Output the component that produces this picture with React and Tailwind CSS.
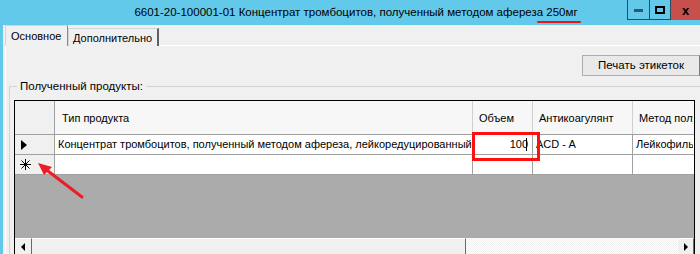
import React from 'react'

const font = { fontFamily: '"Liberation Sans", Arial, sans-serif' }

function TitleBar() {
  return (
    <div className="relative h-[25px] shrink-0 grid grid-cols-[1fr_auto_1fr] items-center">
      <div />
      <div className="pl-[12px] pt-[1px] text-[11.5px] text-black whitespace-nowrap">
        6601-20-100001-01 Концентрат тромбоцитов, полученный методом афереза{' '}
        <span className="relative">
          250мг
          <span className="absolute left-[-9px] right-[-3px] top-[15px] h-[2px] rounded-full bg-[#e8141b]" />
        </span>
      </div>
      <div className="flex justify-end self-start">
        <div className="w-[23px] h-[20px] border border-[#2b4a5a] border-t-0 flex items-center justify-center">
          <div className="w-[9px] h-[3px] bg-[#2e5b70] mt-[1px]" />
        </div>
        <div className="w-[21px] h-[20px] border-b border-r border-[#2b4a5a] flex items-center justify-center">
          <div className="w-[10px] h-[8px] border-2 border-black" />
        </div>
        <div className="w-[29px] h-[20px] bg-[#c7504c] flex items-center justify-center text-[13px] font-bold text-black leading-none">
          x
        </div>
      </div>
    </div>
  )
}

function Tabs() {
  return (
    <div className="flex items-end h-[21px] pl-[2px] shrink-0">
      <div className="h-[21px] w-[63px] bg-[#f0f0f0] border border-b-0 border-[#d4d4d4] border-r-[#8c8c8c] pl-[5px] pt-[2px] text-[11px] text-black">
        Основное
      </div>
      <div className="h-[18px] w-[91px] bg-[#f0f0f0] border border-b-0 border-[#d4d4d4] border-r-[#606060] border-r-2 pl-[4px] pt-[1px] text-[11px] text-black whitespace-nowrap">
        Дополнительно
      </div>
      <div className="flex-1 border-b border-[#ffffff]" />
    </div>
  )
}

function Arrow() {
  return (
    <svg className="absolute left-[34px] top-[158px]" width="56" height="44" viewBox="0 0 56 44">
      <line x1="48" y1="39" x2="10" y2="10" stroke="#ee1c25" strokeWidth="3" strokeLinecap="round" />
      <polygon points="4,5 18,9 10,17" fill="#ee1c25" />
    </svg>
  )
}

function Star() {
  return (
    <svg width="11" height="11" viewBox="0 0 11 11" stroke="black" strokeWidth="1">
      <line x1="5.5" y1="0" x2="5.5" y2="11" />
      <line x1="0" y1="5.5" x2="11" y2="5.5" />
      <line x1="1.5" y1="1.5" x2="9.5" y2="9.5" />
      <line x1="9.5" y1="1.5" x2="1.5" y2="9.5" />
    </svg>
  )
}

function Grid() {
  const cols = 'grid grid-cols-[40px_418px_60px_100px_60px]'
  return (
    <div className="relative w-[681px] h-[157px] border border-black bg-[#ababab] flex flex-col overflow-hidden">
      <div className={`${cols} h-[34px] bg-[#f7f7f7] border-b border-[#a0a0a0] text-[11px] text-black`}>
        <div className="border-r border-[#a0a0a0] bg-[#f0f0f0]" />
        <div className="border-r border-[#d0d0d0] flex items-center pl-[7px] pt-[2px]">Тип продукта</div>
        <div className="border-r border-[#d0d0d0] flex items-center pl-[6px] pt-[2px]">Объем</div>
        <div className="border-r border-[#d0d0d0] flex items-center pl-[6px] pt-[2px]">Антикоагулянт</div>
        <div className="flex items-center pl-[6px] pt-[2px] whitespace-nowrap overflow-hidden">Метод полученния</div>
      </div>
      <div className={`${cols} h-[20px] bg-white border-b border-[#a0a0a0] text-[11px] text-black`}>
        <div className="border-r border-[#a0a0a0] bg-[#f0f0f0] flex items-center pl-[6px]">
          <span className="w-0 h-0 border-y-[5px] border-y-transparent border-l-[6px] border-l-black" />
        </div>
        <div className="border-r border-[#a0a0a0] flex items-center pl-[3px] whitespace-nowrap overflow-hidden">
          Концентрат тромбоцитов, полученный методом афереза, лейкоредуцированный
        </div>
        <div className="border-r border-[#a0a0a0] flex items-center justify-end pr-[5px]">
          100<span className="w-[1px] h-[13px] bg-black ml-[-2px]" />
        </div>
        <div className="border-r border-[#a0a0a0] flex items-center pl-[3px] whitespace-nowrap">ACD - A</div>
        <div className="flex items-center pl-[3px] whitespace-nowrap overflow-hidden">Лейкофильтрация</div>
      </div>
      <div className={`${cols} h-[20px] bg-white border-b border-[#a0a0a0]`}>
        <div className="border-r border-[#a0a0a0] bg-[#f0f0f0] flex items-center pl-[5px]">
          <Star />
        </div>
        <div className="border-r border-[#a0a0a0]" />
        <div className="border-r border-[#a0a0a0]" />
        <div className="border-r border-[#a0a0a0]" />
        <div />
      </div>
      <div className="flex-1" />
      <div className="h-[18px] flex bg-[repeating-conic-gradient(#f0f0f0_0_25%,#ffffff_0_50%)] bg-[length:2px_2px]">
        <div className="w-[17px] h-full bg-[#f0f0f0] border-r border-b border-[#696969] border-t border-t-white flex items-center justify-center">
          <span className="w-0 h-0 border-y-[4px] border-y-transparent border-r-[4px] border-r-black" />
        </div>
        <div className="w-[434px] h-full bg-[#f0f0f0] border-r border-b border-[#696969] border-t border-t-white" />
        <div className="flex-1" />
        <div className="w-[17px] h-full bg-[#f0f0f0] border-l border-l-white border-r border-b border-[#696969] border-t border-t-white flex items-center justify-center">
          <span className="w-0 h-0 border-y-[4px] border-y-transparent border-l-[4px] border-l-black" />
        </div>
      </div>
      <div className="absolute left-[457px] top-[31px] w-[68px] h-[29px] border-[3px] border-[#ff1010]" />
    </div>
  )
}

export default function App() {
  return (
    <div className="relative w-[700px] h-[254px] bg-[#63c9ea] flex flex-col overflow-hidden" style={font}>
      <TitleBar />
      <div className="flex-1 ml-[3px] bg-[#f0f0f0] flex flex-col">
        <Tabs />
        <div className="flex-1 border-l border-white ml-[2px] flex flex-col">
          <div className="flex justify-end pt-[9px]">
            <div className="w-[118px] h-[21px] bg-[#e9e9e9] border border-[#adadad] border-r-[#7a7a7a] flex items-center justify-center text-[11.5px] text-black">
              Печать этикеток
            </div>
          </div>
          <div className="relative mt-[10px] ml-[3px] border-l border-t border-[#d3d3d3] flex-1 pl-[4px] pt-[13px]">
            <div className="absolute left-[7px] top-[-9px] bg-[#f0f0f0] px-[3px] text-[11.5px] text-black">
              Полученный продукты:
            </div>
            <Grid />
          </div>
        </div>
      </div>
      <Arrow />
    </div>
  )
}
